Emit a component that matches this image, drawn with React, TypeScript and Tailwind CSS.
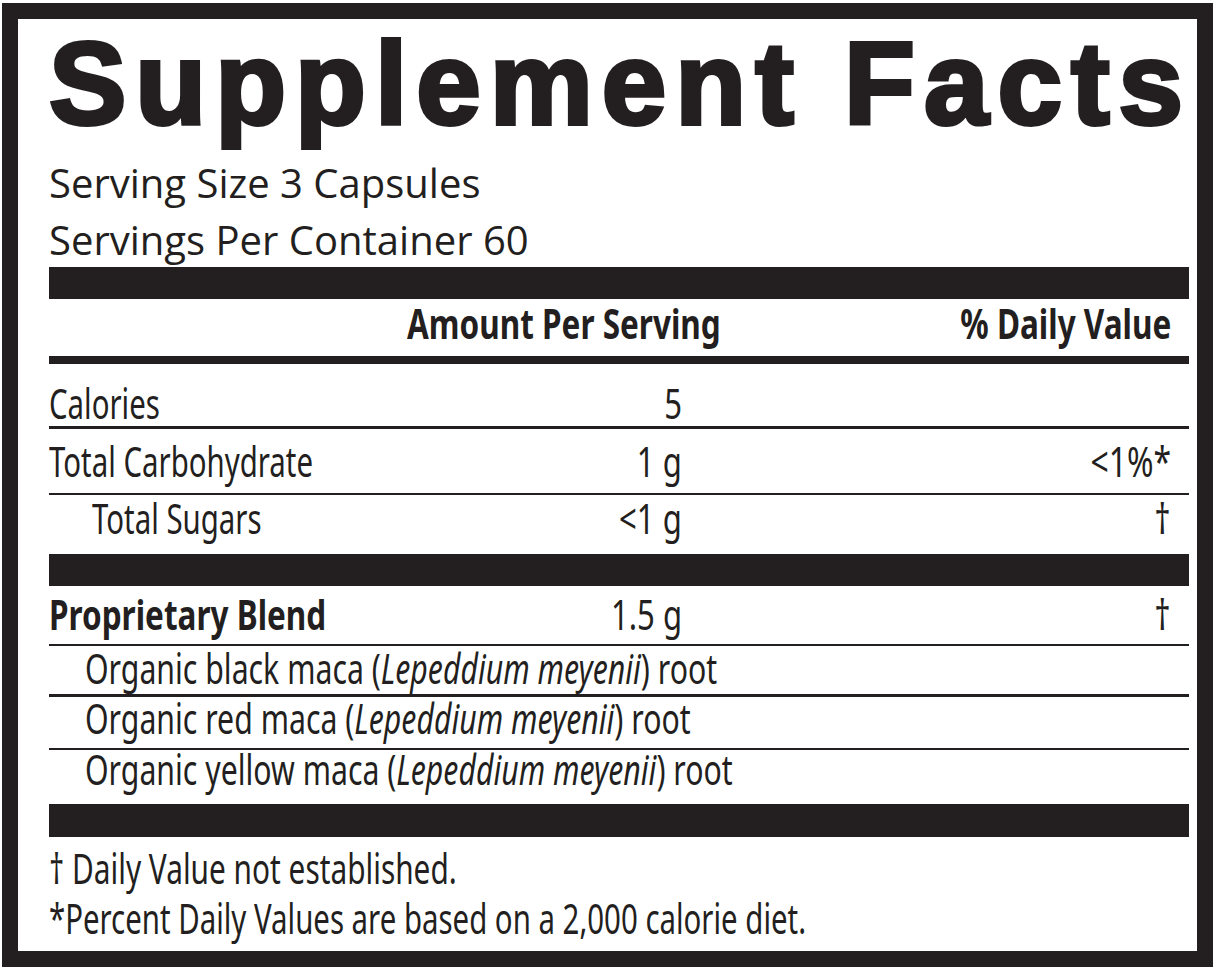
import { ReactNode } from 'react';

// no condensed face installed, so squeeze Noto Sans horizontally
function C({ children, right, k = 'scale-x-[0.7]' }: { children: ReactNode; right?: boolean; k?: string }) {
  return <span className={`inline-block ${k} ${right ? 'origin-right' : 'origin-left'}`}>{children}</span>;
}

interface RowProps {
  h: string;
  pb: string;
  label: ReactNode;
  amount?: string;
  dv?: string;
  indent?: string;
}

function Row({ h, pb, label, amount, dv, indent = '' }: RowProps) {
  return (
    <div className={`flex items-end ${h} ${pb} text-[42px] leading-none whitespace-nowrap`}>
      <div className={`w-[440px] ${indent}`}>{label}</div>
      {amount !== undefined && (
        <>
          <div className="w-[193px] text-right">
            <C right k="scale-x-[0.74]">{amount}</C>
          </div>
          <div className="flex-1 text-right pr-[18px]">
            {dv && (
              <C right k="scale-x-[0.76]">
                {dv}
              </C>
            )}
          </div>
        </>
      )}
    </div>
  );
}

const Line = ({ h }: { h: string }) => <div className={`${h} bg-[#231f20]`} />;

const Maca = ({ color }: { color: string }) => (
  <C k="scale-x-[0.72]">
    Organic {color} maca (<i>Lepeddium meyenii</i>) root
  </C>
);

export default function App() {
  return (
    <div className="w-[1214px] h-[970px] bg-white pt-[3px] pl-[2px]">
      <div className="w-[1211px] h-[964px] border-[16px] border-[#231f20] pl-[31px] pr-[8px] text-[#231f20] font-['Noto_Sans',sans-serif]">
        <div className="mt-[7px] h-[116px] text-[116px] leading-none font-bold tracking-[9px] whitespace-nowrap font-['Liberation_Sans',Arial,sans-serif] [-webkit-text-stroke:4px_#231f20]">
          Supplement Facts
        </div>
        <div className="mt-[12px] h-[113px] text-[40px] leading-[57px] font-['Open_Sans',sans-serif]">
          <div>Serving Size 3 Capsules</div>
          <div>Servings Per Container 60</div>
        </div>
        <Line h="h-[32px]" />
        <div className="flex items-end h-[57px] pb-[12px] text-[42px] leading-none font-bold whitespace-nowrap">
          <div className="ml-[358px]">
            <C k="scale-x-[0.75]">Amount Per Serving</C>
          </div>
          <div className="flex-1 text-right pr-[18px]">
            <C right k="scale-x-[0.75]">% Daily Value</C>
          </div>
        </div>
        <Line h="h-[8px]" />
        <Row h="h-[62px]" pb="pb-[2px]" label={<C>Calories</C>} amount="5" dv="" />
        <Line h="h-[3px]" />
        <Row h="h-[64px]" pb="pb-[11px]" label={<C>Total Carbohydrate</C>} amount="1 g" dv="<1%*" />
        <Line h="h-[2px]" />
        <Row h="h-[59px]" pb="pb-[15px]" indent="pl-[43px]" label={<C>Total Sugars</C>} amount="<1 g" dv="†" />
        <Line h="h-[32px]" />
        <Row
          h="h-[58px]"
          pb="pb-[9px]"
          label={
            <C k="scale-x-[0.75]">
              <b>Proprietary Blend</b>
            </C>
          }
          amount="1.5 g"
          dv="†"
        />
        <Line h="h-[2px]" />
        <Row h="h-[48px]" pb="pb-[5px]" indent="pl-[36px]" label={<Maca color="black" />} />
        <Line h="h-[3px]" />
        <Row h="h-[51px]" pb="pb-[9px]" indent="pl-[36px]" label={<Maca color="red" />} />
        <Line h="h-[2px]" />
        <Row h="h-[54px]" pb="pb-[14px]" indent="pl-[36px]" label={<Maca color="yellow" />} />
        <Line h="h-[33px]" />
        <div className="mt-[10px] text-[42px] leading-none whitespace-nowrap">
          <C k="scale-x-[0.71]">† Daily Value not established.</C>
        </div>
        <div className="mt-[8px] text-[42px] leading-none whitespace-nowrap">
          <C>*Percent Daily Values are based on a 2,000 calorie diet.</C>
        </div>
      </div>
    </div>
  );
}
